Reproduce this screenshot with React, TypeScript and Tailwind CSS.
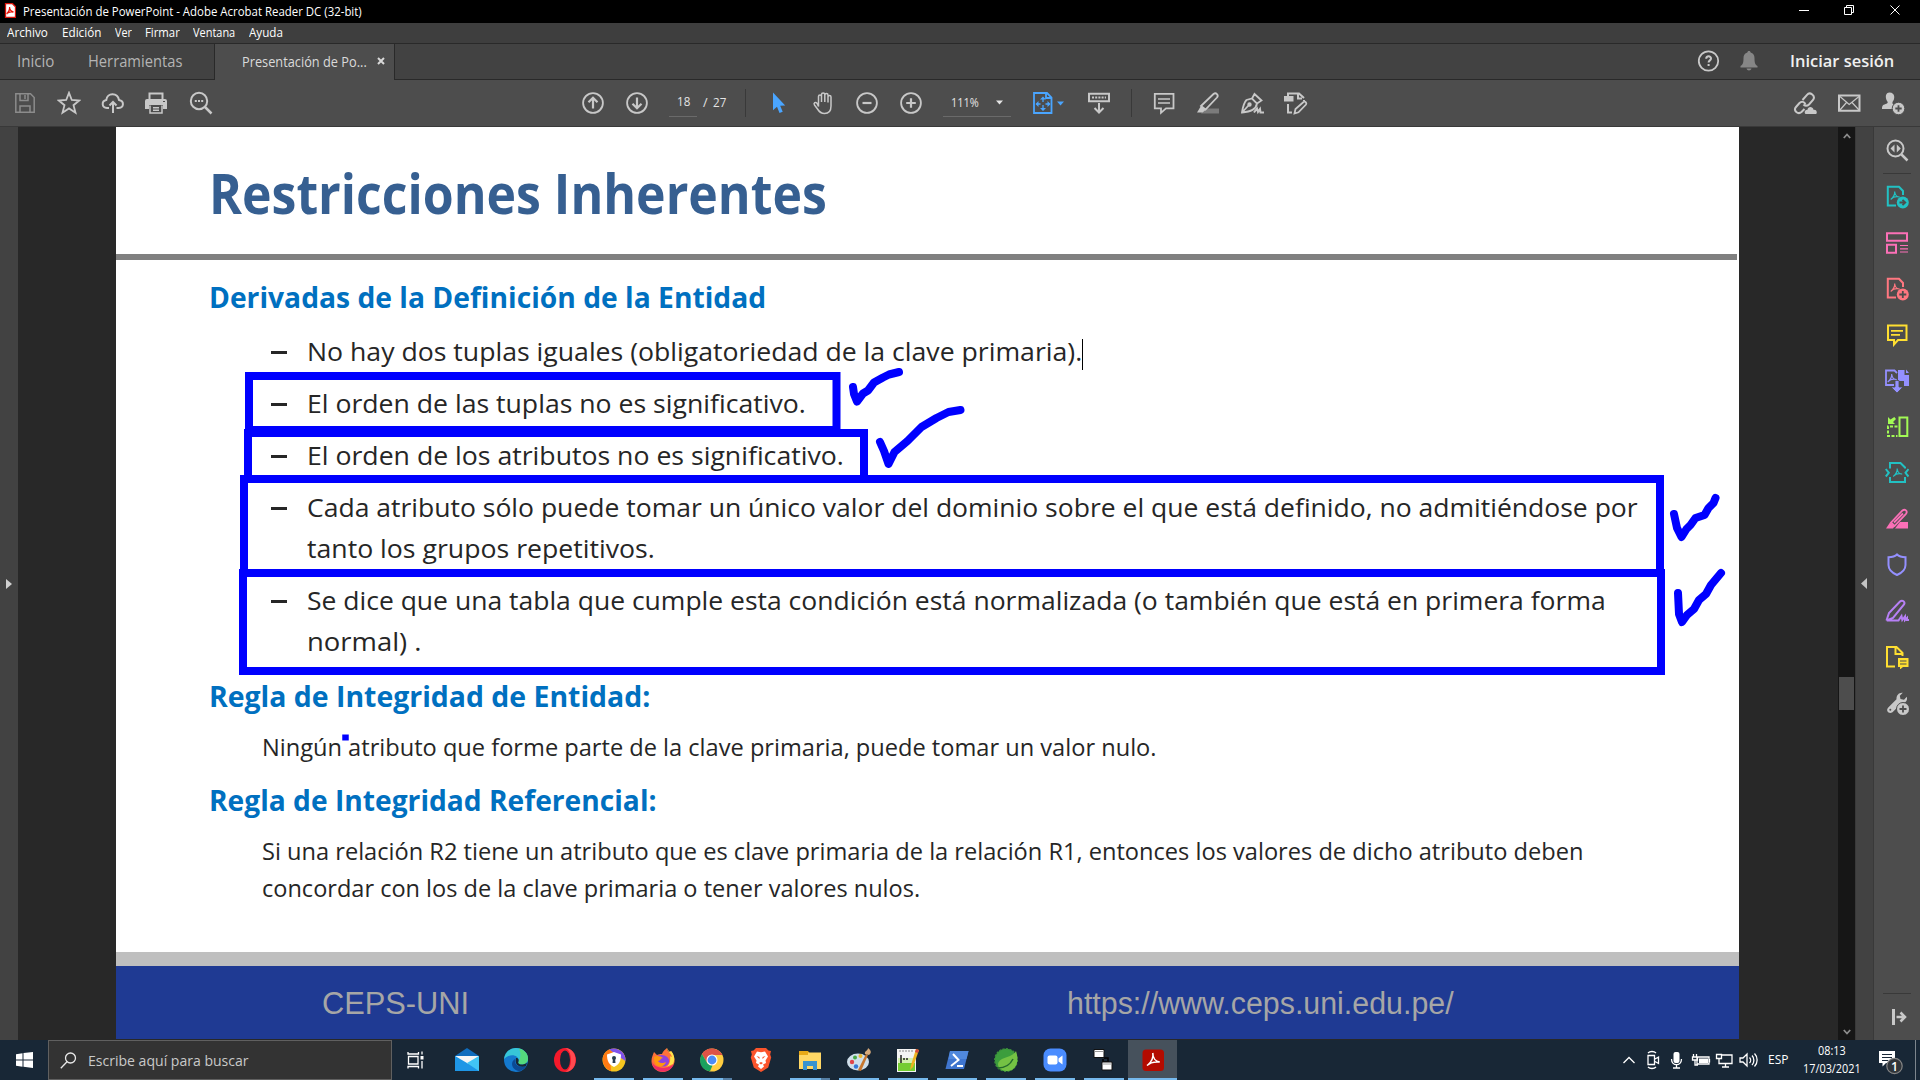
import React, { useLayoutEffect, useRef, useState } from 'react';

const UI = "font-['Open_Sans',sans-serif]";

/** Single line of text that stretches to the width set in className. */
function Fit({ className = '', children }: { className?: string; children: React.ReactNode }) {
  const outer = useRef<HTMLSpanElement>(null);
  const inner = useRef<HTMLSpanElement>(null);
  const [scale, setScale] = useState(1);
  useLayoutEffect(() => {
    if (outer.current && inner.current && inner.current.offsetWidth) {
      setScale(outer.current.clientWidth / inner.current.offsetWidth);
    }
  }, []);
  return (
    <span ref={outer} className={`block shrink-0 whitespace-nowrap ${className}`}>
      <span ref={inner} className="inline-block origin-left [font-variant-ligatures:none]" style={{ transform: `scaleX(${scale})` }}>
        {children}
      </span>
    </span>
  );
}

type IconProps = { children: React.ReactNode; className?: string };

function Icon({ children, className = 'text-[#c8c8c8]' }: IconProps) {
  return (
    <svg viewBox="0 0 24 24" width="24" height="24" fill="none" stroke="currentColor" strokeWidth="1.8" className={`block shrink-0 ${className}`}>
      {children}
    </svg>
  );
}

const Acro = ({ x = 0, y = 0 }: { x?: number; y?: number }) => (
  <path transform={`translate(${x} ${y})`} strokeWidth="1.2" d="M4.2 0.5c.3 3-1 5.500-4 8M4.200 1c.5 3.200 2 5 5 5.200M.6 8c2-2 5-2.700 8.500-2" />
);

function TitleBar() {
  return (
    <div className="flex h-[23px] shrink-0 items-center bg-black text-white">
      <svg width="12" height="15" viewBox="0 0 12 15" className="ml-[4px] mb-[2px] block">
        <path d="M1.500.7h7l3 3v10.600h-10z" fill="#fff" stroke="#d8150c" strokeWidth="1.300" />
        <path d="M5.500 4c.5 3-.8 5-2.800 7M5.500 4c.2 2.500 2 4.500 4 5M2.700 10.500c2-1.700 4-2 6.500-1.500" fill="none" stroke="#e81408" strokeWidth="1.300" />
      </svg>
      <Fit className="ml-[7px] w-[339px] text-[12px] leading-[23px]">Presentación de PowerPoint - Adobe Acrobat Reader DC (32-bit)</Fit>
      <div className="ml-auto flex items-center pr-[19px]">
        <svg width="102" height="12" viewBox="0 0 102 12" className="mb-[3px] block" fill="none" stroke="#fff" strokeWidth="1">
          <path d="M0 6.500h10M45.500 3.500h7v7h-7zM47.500 3.500v-2h7v7h-2M91.500 1.500l9 9M100.500 1.500l-9 9" />
        </svg>
      </div>
    </div>
  );
}

function MenuBar() {
  return (
    <div className="flex h-[21px] shrink-0 border-b border-[#292929] bg-[#3e3e3e] pl-[7px] text-[12px] leading-[19px] text-white">
      <Fit className="w-[41px]">Archivo</Fit>
      <Fit className="ml-[14px] w-[39px]">Edición</Fit>
      <Fit className="ml-[14px] w-[17px]">Ver</Fit>
      <Fit className="ml-[13px] w-[35px]">Firmar</Fit>
      <Fit className="ml-[13px] w-[42px]">Ventana</Fit>
      <Fit className="ml-[14px] w-[34px]">Ayuda</Fit>
    </div>
  );
}

function TabBar() {
  return (
    <div className="flex h-[36px] shrink-0 bg-[#424242] leading-[35px]">
      <div className="flex w-[215px] border-r border-b border-[#292929] pl-[17px] text-[15.500px] text-[#b4b4b4]">
        <Fit className="w-[37px]">Inicio</Fit>
        <Fit className="ml-[34px] w-[94px]">Herramientas</Fit>
      </div>
      <div className="flex w-[179px] items-center bg-[#4d4d4d] pb-[2px] pl-[27px] text-[14px] text-[#dadada]">
        <Fit className="w-[125px]">Presentación de Po...</Fit>
        <svg width="8" height="8" viewBox="0 0 8 8" className="ml-[10px] block" stroke="#d8d8d8" strokeWidth="2">
          <path d="M1 1l6 6M7 1l-6 6" />
        </svg>
      </div>
      <div className="flex flex-1 items-center border-b border-l border-[#292929] pr-[26px]">
        <div className="ml-auto flex items-center pb-px">
          <Icon>
            <circle cx="12.500" cy="12" r="9.700" />
            <path d="M10.200 9.800c0-3.400 5-3.200 4.800-.2-.1 1.800-2.400 1.800-2.400 3.900M12.600 15v2" strokeWidth="2" />
          </Icon>
          <svg width="18" height="20" viewBox="0 0 18 20" className="ml-[20px] block" fill="#868686">
            <path d="M9 0c1 0 1.600.6 1.600 1.500 2.600.8 3.900 2.800 3.900 5.500 0 5 .8 7 3 8v1.500H.5V15c2.200-1 3-3 3-8 0-2.700 1.300-4.700 3.900-5.500C7.400.6 8 0 9 0zM6.500 17.500h5C11 20 7 20 6.500 17.500z" />
          </svg>
          <Fit className="ml-[32px] w-[104px] text-[15.500px] font-semibold text-[#f0f0f0]">Iniciar sesión</Fit>
        </div>
      </div>
    </div>
  );
}

const Down = ({ className = '' }: { className?: string }) => (
  <svg width="7" height="5" viewBox="0 0 7 5" className={`block shrink-0 ${className}`} fill="currentColor">
    <path d="M0 .5h7L3.500 4.500z" />
  </svg>
);

function Toolbar() {
  return (
    <div className="flex h-[47px] shrink-0 items-center border-b border-[#393939] bg-[#4d4d4d] text-[#c8c8c8]">
      <div className="flex w-[581px] gap-5 pl-[13px]">
        <Icon className="text-[#8c8c8c]">
          <path d="M2.800 2.800h14.700l3.700 3.700v14.700H2.800zM7 3v6.500h8V3M12 4v4M7 21v-6h10v6" strokeWidth="1.500" />
        </Icon>
        <Icon><path d="M12 1.800l2.800 7.200 7.500.5-5.800 4.700 2 7.500L12 17.400l-6.500 4.300 2-7.500L1.700 9.500 9.200 9z" /></Icon>
        <Icon><path d="M8 17H6C.5 16.500.3 10 5.300 9 6 1.500 16.500 1 18 9c5.500 1 5 7.500-.2 8H15.500M12 22V11M8.500 14.500L12 11l3.500 3.500" strokeWidth="2" /></Icon>
        <Icon>
          <g transform="translate(-1 0)">
            <path d="M5.500 8V2.500h13V8" strokeWidth="2" />
            <path d="M3 8h18q2 0 2 2v8h-4v-4H5v4H1v-8q0-2 2-2z" fill="currentColor" stroke="none" />
            <path d="M6 14.500v7.500h12v-7.500M9 16.800h6M9 19.300h6" strokeWidth="1.500" />
            <path d="M19 10.500h2" stroke="#4d4d4d" strokeWidth="1" />
          </g>
        </Icon>
        <Icon>
          <circle cx="10" cy="10" r="8.200" strokeWidth="2" />
          <path d="M16 16l6.500 6.500" strokeWidth="2.500" />
          <path d="M5.800 10h2M9 10h2M12.200 10h2" strokeWidth="2" />
        </Icon>
      </div>
      <div className="flex items-center gap-5">
        <Icon><circle cx="12" cy="12" r="9.900" /><path d="M12 17.500V7M7.500 11.300L12 6.800l4.500 4.500" strokeWidth="2.200" /></Icon>
        <Icon><circle cx="12" cy="12" r="9.900" /><path d="M12 6.500V17M7.500 12.700l4.500 4.500 4.500-4.500" strokeWidth="2.200" /></Icon>
      </div>
      <div className="ml-[20px] flex h-[27px] w-[28px] justify-center border-b border-[#6a6a6a] mt-[1px] text-[12.500px] leading-[24px] text-[#e4e4e4]">
        <Fit className="w-[13px]">18</Fit>
      </div>
      <div className="flex text-[12.500px] leading-[24px] text-[#e4e4e4]">
        <Fit className="ml-[6px] w-[5px]">/</Fit>
        <Fit className="ml-[5px] w-[13px]">27</Fit>
      </div>
      <div className="ml-[19px] h-7 w-px bg-[#393939]" />
      <div className="ml-[21px] flex gap-5">
        <Icon className="text-[#4aa5ff]"><path d="M6 1.500v17.800l4-3.500 2.500 6.200 3.200-1.300-2.500-6 5-.2z" fill="currentColor" stroke="none" /></Icon>
        <Icon>
          <path d="M6.500 15.500V5.500c0-2 3-2 3 0V11V3.500c0-2 3.300-2 3.300 0V11V4c0-2 3.200-2 3.200 0v7.500V6c0-2 3-2 3 0v9c0 5-2 7.500-6.500 7.500-4 0-5.500-2-7-4.500L2.500 14c-1.300-2 1-3.500 2.500-1.800z" transform="translate(1 0)" strokeWidth="1.500" />
        </Icon>
        <Icon><circle cx="12" cy="12" r="9.900" /><path d="M7.500 12h9" strokeWidth="2.200" /></Icon>
        <Icon><circle cx="12" cy="12" r="9.900" /><path d="M7.200 12h9.600M12 7.200v9.600" strokeWidth="2.200" /></Icon>
      </div>
      <div className="ml-[20px] mt-[1px] flex h-[27px] w-[68px] items-center border-b border-[#6a6a6a] pb-px pl-[8px] text-[12.500px] leading-[24px] text-[#e4e4e4]">
        <Fit className="w-[28px]">111%</Fit>
        <Down className="ml-[17px]" />
      </div>
      <div className="ml-[20px] flex items-center text-[#4aa5ff]">
        <Icon className="text-[#4aa5ff]">
          <path d="M3 2h13l4.500 4.500V22H3zM15 2v5h5.500" />
          <path d="M12 7v4M12 14v5M5.500 13h4M14.500 13h4" strokeWidth="1.300" />
          <path d="M12 5.500l3 3H9zM12 20l3-3H9zM4.500 13l3-3v6zM19.500 13l-3-3v6z" fill="currentColor" stroke="none" />
        </Icon>
        <Down className="ml-[2px]" />
      </div>
      <Icon className="ml-[23px] text-[#c8c8c8]">
        <path d="M2 2.800h20v7.500H2zM12 12v9M7.500 17l4.500 4.500 4.500-4.500" strokeWidth="2" />
        <path d="M5 6.500h14" strokeDasharray="2 1.200" />
      </Icon>
      <div className="ml-[20px] h-7 w-px bg-[#393939]" />
      <div className="ml-[20px] flex gap-5">
        <Icon><path d="M2.800 2.800h18.700v14.500H14l-5 4.500v-4.500H2.800z" /><path d="M6 8h12M6 12h12" strokeWidth="1.300" /></Icon>
        <Icon>
          <path d="M8 17.500h15v5H5z" fill="#7b7b7b" stroke="none" />
          <path d="M5 15L17.500 3c2.500-2 5.500 1 3.500 3.500L9.500 18.500z" />
          <path d="M5 15l4.500 4-3 2.500H1z" fill="currentColor" stroke="none" />
        </Icon>
        <Icon>
          <path d="M2 21.500C3 15 4 11.500 6.500 9L12 7.500l5 5c-1 6-6 8-15 9zM12 7.500L14.500 3l7 6.500-4.500 3M2 21.500l6.500-7" />
          <circle cx="9.500" cy="13.500" r="1.300" fill="currentColor" />
          <path d="M14 21.500l3-4 1 3.500 2-3 .5 3.500H24" strokeWidth="2" />
        </Icon>
        <Icon>
          <path d="M4 6V2.500h11L20 7M14 2.500v5h4M4 13v8.500h4M20 9v1" strokeWidth="2" />
          <path d="M0 5h9.500v5.500H0z" fill="currentColor" stroke="none" />
          <path d="M10.500 22.500l1-4.500 8-7c2-1 3.500 1 2.500 2.500l-7.500 7.800z" />
        </Icon>
      </div>
      <div className="ml-auto flex gap-5 pr-[15px]">
        <Icon>
          <path d="M9.500 9L14 3.800c3-3.500 9 1 6 5.200l-4 4.500c-2 2-4.500 1.500-5.500 0M12.500 13.500c-1-3-4-3.500-6-1.500L3 16c-3 3.500 2 8 5.500 5l3-3" strokeWidth="2" />
          <path d="M12.500 23c-2-2 0-4.500 2-4.200.5-4 5.500-3.500 6 0 3.500-.5 4 3.500 2.500 4.200z" fill="currentColor" stroke="none" />
        </Icon>
        <Icon><path d="M2 4.500h20.500v15.200H2z" strokeWidth="2" /><path d="M3 5.500l9.200 8L22 5.500M3 19l6.500-7.500M22 19l-7-7.500" strokeWidth="1.200" /></Icon>
        <Icon>
          <path d="M8.500 1.500c6 0 5.500 7 3 9.500-.5 2 .5 2.500 3 3v4H1c0-4 1-4 5-5.500C7 11.500 7 11 6 10 4 6 4.500 1.500 8.500 1.500z" fill="currentColor" stroke="none" />
          <circle cx="17.500" cy="17.500" r="6.300" fill="#c8c8c8" stroke="#4d4d4d" strokeWidth="1" />
          <path d="M14.300 17.500h6.400M17.500 14.300v6.400" stroke="#4d4d4d" />
        </Icon>
      </div>
    </div>
  );
}

const H2 = "text-[29px] leading-[36px] font-bold text-[#0070c0]";

function Bullet({ children }: { children: React.ReactNode }) {
  return (
    <li className="flex">
      <span className="mt-[20px] mr-[20px] h-[3px] w-[16px] shrink-0 bg-[#262626]" />
      <div>{children}</div>
    </li>
  );
}

function Slide() {
  return (
    <div className={`relative flex h-[912px] w-[1623px] shrink-0 flex-col bg-white text-[#262626] ${UI}`}>
      <h1 className="mt-[36px] ml-[93px] text-[55px] leading-[60px] font-bold text-[#365f91]">
        <Fit className="w-[618px]">Restricciones Inherentes</Fit>
      </h1>
      <div className="mt-[31px] mr-[2px] h-[6px] shrink-0 bg-[#808080]" />
      <div className="pl-[93px]">
        <h2 className={`mt-[19px] ${H2}`}><Fit className="w-[557px]">Derivadas de la Definición de la Entidad</Fit></h2>
        <ul className="mt-[16px] flex flex-col gap-[11px] pl-[62px] text-[25.500px] leading-[41px]">
          <Bullet><Fit className="w-[775px]">No hay dos tuplas iguales (obligatoriedad de la clave primaria).</Fit></Bullet>
          <Bullet><Fit className="w-[499px]">El orden de las tuplas no es significativo.</Fit></Bullet>
          <Bullet><Fit className="w-[537px]">El orden de los atributos no es significativo.</Fit></Bullet>
          <Bullet>
            <Fit className="w-[1331px]">Cada atributo sólo puede tomar un único valor del dominio sobre el que está definido, no admitiéndose por</Fit>
            <Fit className="w-[348px]">tanto los grupos repetitivos.</Fit>
          </Bullet>
          <Bullet>
            <Fit className="w-[1299px]">Se dice que una tabla que cumple esta condición está normalizada (o también que está en primera forma</Fit>
            <Fit className="w-[114px]">normal) .</Fit>
          </Bullet>
        </ul>
        <h2 className={`mt-[16px] ${H2}`}><Fit className="w-[441px]">Regla de Integridad de Entidad:</Fit></h2>
        <div className="mt-[15px] pl-[53px] text-[23px] leading-[37px]">
          <Fit className="w-[895px]">Ningún atributo que forme parte de la clave primaria, puede tomar un valor nulo.</Fit>
        </div>
        <h2 className={`mt-[16px] ${H2}`}><Fit className="w-[448px]">Regla de Integridad Referencial:</Fit></h2>
        <div className="mt-[15px] pl-[53px] text-[23px] leading-[37px]">
          <Fit className="w-[1321px]">Si una relación R2 tiene un atributo que es clave primaria de la relación R1, entonces los valores de dicho atributo deben</Fit>
          <Fit className="w-[658px]">concordar con los de la clave primaria o tener valores nulos.</Fit>
        </div>
      </div>
      <div className="mt-auto h-[14px] shrink-0 bg-[#bfbfbf]" />
      <div className="flex h-[73px] shrink-0 items-center bg-[#1f3a93] pl-[206px] font-['Liberation_Sans',sans-serif] text-[31px] leading-[73px] text-[#a6a6a6]">
        <Fit className="mt-[2px] w-[147px]">CEPS-UNI</Fit>
        <Fit className="mt-[2px] ml-[598px] w-[387px]">https://www.ceps.uni.edu.pe/</Fit>
      </div>

      {/* Pen annotations drawn over the slide */}
      <svg className="absolute top-0 left-0" width="1623" height="912" viewBox="116 127 1623 912" fill="none" stroke="#0000ff" strokeWidth="8">
        <path d="M249 376h587.500v54H249z" />
        <path d="M248 433h616v46H248z" />
        <path d="M244 479h1416v94H244z" />
        <path d="M243 573h1418v98H243z" />
        <g strokeLinecap="round" strokeLinejoin="round" strokeWidth="8">
          <path d="M853 387l1 7 3 7.500 6-8 5-3 6-8 9-5 6-3 10-2.500" />
          <path d="M880 442l4 9 4.500 13 6-12 13-11 14-14 15-9 12-6 12-2" />
          <path d="M1674 514l3 14 4.500 9 5-8 4-4 5-7 9-3 4-7 5-5 2-5" />
          <path d="M1678 593l1 21 3 8 5-7 7-6 5-9 7-6 5-9 10-12" />
        </g>
        <path d="M345.500 734.500v6" strokeWidth="6.500" />
        <path d="M1082.500 339v31" stroke="#000" strokeWidth="1" />
      </svg>
    </div>
  );
}

const Sep = ({ className = '' }: { className?: string }) => <div className={`h-px w-7 shrink-0 bg-[#393939] ${className}`} />;

function ToolsPane() {
  return (
    <div className="flex w-[47px] shrink-0 flex-col items-center border-l border-[#393939] bg-[#4d4d4d] pt-[11px] pr-px">
      <Icon>
        <circle cx="10.500" cy="10.500" r="8" strokeWidth="2" />
        <path d="M16.500 16.500l6 6" strokeWidth="2.500" />
        <path d="M9.500 6.500v8l-4-4zM11.800 6.500v8l4-4z" fill="currentColor" stroke="none" />
      </Icon>
      <Sep className="mt-[11px]" />
      <div className="mt-[11px] flex flex-col gap-[22px]">
        <Icon className="text-[#22c1c3]">
          <path d="M11 20.500H2.800V1.800H14l4 4.200V10" strokeWidth="2" /><Acro x={5.500} y={6} />
          <circle cx="17.800" cy="17.500" r="6" fill="currentColor" stroke="none" />
          <path d="M14.500 17.500h5M17.500 14.800l2.800 2.700-2.800 2.700" stroke="#4d4d4d" />
        </Icon>
        <Icon className="text-[#fb70b7]">
          <path d="M2 2.200h20v7.500H2zM2 13.800h9v8H2z" strokeWidth="2" /><path d="M15 14.500h8M15 17.800h8M15 21h8" strokeWidth="1.200" />
        </Icon>
        <Icon className="text-[#ff7780]">
          <path d="M11 20.500H2.800V1.800H14l4 4.200V10" strokeWidth="2" /><Acro x={5.500} y={6} />
          <circle cx="17.800" cy="17.500" r="6" fill="currentColor" stroke="none" />
          <path d="M14.300 17.500h7M17.800 14v7" stroke="#4d4d4d" />
        </Icon>
        <Icon className="text-[#ffdf31]">
          <path d="M3 2.500h18.500V17H13l-4 4.500V17H3z" strokeWidth="2" /><path d="M6 7.800h12M6 11.800h9" />
        </Icon>
        <Icon className="text-[#9490ff]">
          <path d="M9 16H1V1.500h8.500L12 4" strokeWidth="1.800" />
          <path d="M13 1h6.500v5H24v11h-5v-5h-6z" fill="currentColor" stroke="none" />
          <path d="M21 0.500l3 3.500h-3z" fill="currentColor" stroke="none" />
          <path d="M10 11.500h4V18h4l-6 6-6-6h4z" fill="currentColor" stroke="#4d4d4d" strokeWidth=".8" />
          <Acro x={2.500} y={4.500} />
        </Icon>
        <Icon className="text-[#a2fa55]">
          <path d="M14.500 2.500h7.800v18.500h-7.800z" strokeWidth="2" />
          <path d="M12.500 11.500H3V21h9.500" strokeDasharray="3 1.500" strokeWidth="2" />
          <path d="M3 2v7h7L8 7l3-3-1.700-2L5.500 4.500z" fill="currentColor" stroke="none" />
        </Icon>
        <Icon className="text-[#22c1c3]">
          <path d="M5 7.500V2h10.500L20 6.500v1M5 16v5h15v-5" strokeWidth="2" /><Acro x={8} y={7} />
          <path d="M.8 8l3 3.800-3 3.700M23.500 8l-3 3.800 3 3.700" strokeWidth="2" />
        </Icon>
        <Icon className="text-[#fb70b7]">
          <path d="M6 15.500L17.500 3.500c2.500-2 5.500.8 3.500 3.300L9.500 19zM9 15.500L18 6.500" />
          <path d="M5 15.500l4.500 4-1.500 2H1zM10 21.500l5-6.500h8v6.500z" fill="currentColor" stroke="none" />
        </Icon>
        <Icon className="text-[#9490ff]">
          <path d="M12 1.500c2 2 5 2.700 8.500 2.800V12c0 5-4 8-8.500 10-4.500-2-8.500-5-8.500-10V4.300C7 4.200 10 3.500 12 1.500z" strokeWidth="2" />
        </Icon>
        <Icon className="text-[#b780f5]">
          <path d="M1.500 21.500L4 14 15 2.500c2.500-2 5.500.5 4 3L8 19l-6.500 2.500M3 21.500h10.500l3-4.500.8 4 2.700-3.500v3.500l2-2V21h2" strokeWidth="2" />
        </Icon>
        <Icon className="text-[#ffdf31]">
          <path d="M10 21.500H2V2h9.500l6 6v3M10.500 2v7h7" strokeWidth="2" />
          <path d="M13 13h10.500v9H18l-3 2.500V22h-2z" fill="currentColor" stroke="none" />
          <path d="M15 16h6.500M15 19h6.500" stroke="#4d4d4d" strokeWidth="1.200" />
        </Icon>
        <Icon>
          <path d="M17.800 1.800l-3 3 .7 3.300 3.500.7 2.800-3c1 3.500-1 6.500-5 6.300L7.500 21.300c-3.500 2.300-7-1.500-4.500-4.500l8.500-8.500c-.3-4 2.500-7 6.300-6.500z" fill="currentColor" stroke="none" />
          <circle cx="5.300" cy="18.800" r="1" fill="#4d4d4d" stroke="none" />
          <circle cx="18" cy="18" r="6.500" fill="currentColor" stroke="#4d4d4d" strokeWidth="1" />
          <path d="M14.500 18h7M18 14.500v7" stroke="#4d4d4d" />
        </Icon>
      </div>
      <Sep className="mt-auto" />
      <Icon className="mt-[11px] mb-[11px] ml-[8px] text-[#c8c8c8]"><path d="M4.500 4v16" strokeWidth="3" /><path d="M7.500 12h8M11.500 7.500l4.500 4.500-4.500 4.500" strokeWidth="2.500" /></Icon>
    </div>
  );
}

function Workspace() {
  return (
    <div className="flex h-[913px] shrink-0 bg-[#282828]">
      <div className="flex w-[18px] items-center justify-center bg-[#424242]">
        <svg width="6" height="10" viewBox="0 0 6 10" fill="#d0d0d0"><path d="M0 0l6 5-6 5z" /></svg>
      </div>
      <div className="flex flex-1 pl-[98px]"><Slide /></div>
      <div className="flex w-[17px] flex-col items-center bg-[#161616]">
        <svg width="8" height="6" viewBox="0 0 8 6" className="mt-[6px] block" fill="none" stroke="#8c8c8c" strokeWidth="1.800"><path d="M.8 5L4 1.500 7.200 5" /></svg>
        <div className="mt-[538px] h-[33px] w-[15px] bg-[#4d4d4d]" />
        <svg width="8" height="6" viewBox="0 0 8 6" className="mt-auto mb-[5px] block" fill="none" stroke="#8c8c8c" strokeWidth="1.800"><path d="M.8 1L4 4.500 7.200 1" /></svg>
      </div>
      <div className="flex w-[18px] items-center justify-center border-l border-[#393939] bg-[#424242] pr-px">
        <svg width="6" height="11" viewBox="0 0 6 11" fill="#c4c4c4"><path d="M6 0L0 5.500 6 11z" /></svg>
      </div>
      <ToolsPane />
    </div>
  );
}

type AppState = 'none' | 'open' | 'multi' | 'active';

function Task({ state = 'none', children }: { state?: AppState; children: React.ReactNode }) {
  return (
    <div className={`flex w-[49px] shrink-0 flex-col items-center ${state === 'active' ? 'bg-[#46515c]' : ''}`}>
      <svg width="24" height="24" viewBox="0 0 24 24" className="mt-[8px] block">{children}</svg>
      {state === 'open' && <div className="mt-auto h-[2px] w-[40px] bg-[#76b9ed]" />}
      {state === 'active' && <div className="mt-auto h-[2px] w-full bg-[#76b9ed]" />}
      {state === 'multi' && (
        <div className="mt-auto flex h-[2px] w-[40px]"><div className="w-[31px] bg-[#76b9ed]" /><div className="w-[9px] bg-[#557fa5]" /></div>
      )}
    </div>
  );
}

function Taskbar() {
  return (
    <div className={`flex h-[40px] shrink-0 bg-[#182736] text-white ${UI}`}>
      <div className="flex w-[48px] items-center justify-center">
        <svg width="17" height="16" viewBox="0 0 17 16" fill="#fff"><path d="M0 2.200l6.500-.9v6.200H0zM7.500 1.100L17 0v7.500H7.500zM0 8.500h6.500v6.200L0 13.800zM7.500 8.500H17V16l-9.500-1.200z" /></svg>
      </div>
      <div className="flex w-[344px] items-center border border-[#606060] bg-[#333] pl-[11px]">
        <svg width="17" height="17" viewBox="0 0 17 17" fill="none" stroke="#e8e8e8" strokeWidth="1.300"><circle cx="10.500" cy="6" r="5" /><path d="M7 9.700L.8 16.200" /></svg>
        <Fit className="ml-[11px] w-[161px] text-[15px] leading-[39px] text-[#c9c9c9]">Escribe aquí para buscar</Fit>
      </div>
      <div className="flex w-[50px] items-center justify-center pr-[3px]">
        <svg width="17" height="18" viewBox="0 0 17 18" fill="none" stroke="#fff" strokeWidth="1.300"><path d="M1.500 5.500h9.500v7.500H1.500zM1 1v2h10.500V1M1 17.500v-2h10.500v2M15 .5v3M15 10v7.500" /><path d="M13.500 5h3v3.500h-3z" fill="#fff" stroke="none" /></svg>
      </div>
      <Task>
        <path d="M0 8L12 0l12 8v4H0z" fill="#0f6cbd" /><path d="M0 8h24v15H0z" fill="#29aef0" /><path d="M0 8h24L12 17z" fill="#f5f5f5" /><path d="M0 8v15h24L12 15z" fill="#1e96e6" /><path d="M24 8v15L12 15z" fill="#41c5f5" />
      </Task>
      <Task>
        <circle cx="12" cy="12" r="12" fill="#1479cf" />
        <path d="M0 11C1 4 6 0 12 0c7 0 12 5 12 10.500 0 4-3 6-6.500 6-3 0-4-1.500-3-3C16 8 7 4 0 11z" fill="#37c6d8" />
        <path d="M15 .5c6 1.500 9 5.500 9 10 0 4-3 6-6.500 6-3 0-4-1.500-3-3C17 9 17 5 15 .5z" fill="#5fe05f" opacity=".75" />
        <path d="M11 11c-6 4-2 12 5 12 3-1 5-3 6-5-6 2-12 0-11-7z" fill="#0c4a94" />
        <path d="M12 10c2-.5 3 1.500 2.500 3.500-1 1.500.5 3 3 3 2 0 4-.5 5.500-2l-1 3.500c-5 2-12 0-10-8z" fill="#182736" />
      </Task>
      <Task>
        <ellipse cx="12" cy="12" rx="11" ry="12" fill="#f5192b" /><path d="M12 0c14 0 14 24 0 24 8-3 8-21 0-24z" fill="#ff4a50" /><ellipse cx="12" cy="12" rx="5" ry="9.500" fill="#182736" />
      </Task>
      <Task state="open">
        <circle cx="12" cy="12" r="11.500" fill="#f4c51f" /><path d="M7 1.500C15-2 24 4 23.500 13L13 6z" fill="#8052eb" /><path d="M7 1.500C-3 7 0 20 9 23L8 7l4-2z" fill="#ff7a13" />
        <path d="M12 4l7 2.500c0 7-2 10-7 12.500-5-2.500-7-5.500-7-12.500z" fill="#fff" /><circle cx="12" cy="10" r="2" fill="#273b4e" /><path d="M11 10h2l.5 5h-3z" fill="#273b4e" />
      </Task>
      <Task state="open">
        <path d="M3 4l3 3c2-1 3-1 5-1 1-3 3-4.500 5-6 0 2 1 3 2 4l2-1c3 4 4 8 3.500 11C22 20 17 24 12 24 5 24 .5 19 .5 13 .5 9 2 7 3 4z" fill="#ff7139" />
        <path d="M16 0c0 3 4 5 5 9-1 0-2-1-2-1 1 6-1 9-4 11l7-3c3-6 0-11-2-13l-1 1c-1-1-2-2-3-4z" fill="#ffe14a" />
        <path d="M1 14c1 12 18 13 22 2-4 5-18 6-22-2z" fill="#ee2c66" /><path d="M6 8c6-3 13 1 12 6-1 5-8 6-11 2z" fill="#8f42dd" /><path d="M3 9c3-2 7-1 9 1-3 0-2 3-5 3 2 3 6 2 8 1-2 7-13 6-12-5z" fill="#ff980e" />
      </Task>
      <Task state="multi">
        <circle cx="12" cy="12" r="11.500" fill="#ffcd40" /><path d="M2 6c4-7.500 16-7.500 20.500 1H12L7 14.500z" fill="#de5347" /><path d="M2 6l5.500 9.500 5 2L10 23.300C0 22-2 12 2 6z" fill="#1aa15f" /><circle cx="12" cy="12" r="5.500" fill="#fff" /><circle cx="12" cy="12" r="4.400" fill="#4c8bf5" />
      </Task>
      <Task>
        <path d="M7 0h10l2.500 2.500L22 3l-.8 3.500 1 3-3 10L12 24l-7.200-4.500-3-10 1-3L2 3l2.500-.5z" fill="#fb542b" />
        <path d="M8 3.500l4 .8 4-.8 3 5-2.500 4 .5 2.500-3 1.500 1 2-3 2.500L9 18.500l1-2L7 15l.5-2.500L5 8.500z" fill="#fff" /><path d="M7.500 8l3 1v2zM16.500 8l-3 1v2zM10 15l2-1 2 1-2 1.500z" fill="#fb542b" />
      </Task>
      <Task state="multi">
        <path d="M1 3h9l1.500 2H1z" fill="#e5a50c" /><path d="M1 4.500h22V21H1z" fill="#ffd765" /><path d="M1 3h9v4H1z" fill="#e8a917" /><path d="M5 22v-9h14v9h-4v-4H9v4z" fill="#3893d0" />
      </Task>
      <Task state="open">
        <ellipse cx="11" cy="14" rx="11" ry="8.500" fill="#cfdfea" /><circle cx="5" cy="14" r="2.200" fill="#e0444a" /><circle cx="8" cy="9.500" r="2" fill="#46a846" /><circle cx="13.500" cy="8" r="2" fill="#e9b72f" /><circle cx="9" cy="18.500" r="2.200" fill="#3478d8" /><path d="M11 22L19 6l2 1-7 16z" fill="#c7772f" /><path d="M18 6c-1-3 3-3 3-6 3 2 4 5 1 7z" fill="#d6aa7b" />
      </Task>
      <Task state="open">
        <path d="M1 1h19v23H1z" fill="#f4f4f4" /><path d="M2 13h17v10H2z" fill="#75cd32" /><path d="M2 10h17v5H2z" fill="#d4efb0" /><path d="M4 2v2M7 2v2M10 2v2M13 2v2M16 2v2" stroke="#888" /><path d="M5 7v8M7 11h2M10 11h2" stroke="#222" strokeWidth="1.500" /><path d="M20 1l3 1-6 17-3 3 1-5z" fill="#efb321" /><path d="M20 1l3 1-1 3-3-1z" fill="#d84a3c" />
      </Task>
      <Task state="open">
        <path d="M5 3h18.500l-4.500 18H.5z" fill="#3f75cf" /><path d="M5 3h18.500l-2 8-18 0z" fill="#5088dc" /><path d="M8 6l5.500 6L6 18M12 18h6" fill="none" stroke="#fff" strokeWidth="2" />
      </Task>
      <Task state="open">
        <circle cx="12" cy="12" r="11.200" fill="#3c9d3d" stroke="#3c8f3b" strokeWidth="1.500" strokeDasharray="2 1.500" /><path d="M22 3c4 12-1 20-9 20-5 0-9-3-9-7C6 8 17 11 22 3z" fill="#74c244" /><path d="M4 20c8 0 12-3 15-9" fill="none" stroke="#246b2d" strokeWidth="1.500" />
      </Task>
      <Task state="open">
        <rect x=".5" y=".5" width="23" height="23" rx="7" fill="#4a8cff" /><rect x="4.500" y="7.500" width="10" height="9" rx="2" fill="#fff" /><path d="M15.500 10.500l4-3v9l-4-3z" fill="#fff" />
      </Task>
      <Task state="open">
        <path d="M11 11v3h4M12 10h4v4" fill="none" stroke="#000" strokeWidth="1.500" /><path d="M2 1.500h10v8H2zM10 14h10v8H10z" fill="#fff" stroke="#111" /><path d="M2.500 3.500h9M10.500 16h9" stroke="#9a9a9a" />
      </Task>
      <Task state="active">
        <rect x="1.500" y="1.500" width="21.500" height="21.500" rx="3.500" fill="#b30b00" /><path d="M11.800 5c1 5-1.500 9-5.500 12.500M11.800 5c0 5 3 8.500 7 9M6 17.500c3-3 7-4 12.500-3.500" fill="none" stroke="#fff" strokeWidth="1.500" />
      </Task>

      <div className="ml-auto flex items-center">
        <svg width="140" height="20" viewBox="0 0 140 20" className="block" fill="none" stroke="#fff" strokeWidth="1.300">
          <path d="M2.500 13l5.500-5.500L13.500 13" />
          <path d="M27 5.500h6.500v9H27zM34 9l3.500-2v6.500L34 11.500M27 3c2-2 6-2 8 0M27 17c2 2 6 2 8 0" />
          <rect x="52.500" y="2" width="6" height="11" rx="2" fill="#fff" stroke="none" /><path d="M50.500 9c0 7.500 10 7.500 10 0M55.500 15v3M52 18h7" />
          <path d="M76 7h12v7H76zM88.500 9v3.500M72.500 4v3M75.500 4v3M71.500 7h5v3h-5zM74 10v5h3" /><path d="M78 8.500h9v4.500h-9z" fill="#fff" stroke="none" />
          <path d="M101 5h10v8.500H98V10M104.500 13.500V17M101 17h7M95.500 4.500h5v4h-5zM98 8v4" />
          <path d="M119 8h3l4-4v12l-4-4h-3zM128.500 7.500c1.500 1.500 1.500 4 0 5.500M131 5.500c2.500 2.500 2.500 7 0 9.500M133.500 3.500c3.500 3.500 3.500 9.500 0 13" />
        </svg>
        <Fit className="ml-[7px] w-[20px] text-[12px] leading-[38px]">ESP</Fit>
        <div className="ml-[15px] flex flex-col items-center text-[12px] leading-[18px]">
          <Fit className="w-[28px]">08:13</Fit>
          <Fit className="w-[58px]">17/03/2021</Fit>
        </div>
        <svg width="26" height="26" viewBox="0 0 26 26" className="ml-[17px] mt-[4px] block">
          <path d="M1 2h16v12H8l-3.500 3.500V14H1z" fill="#fff" /><path d="M4 5.500h10M4 8.500h10M4 11.500h6" stroke="#182736" strokeWidth="1.200" />
          <circle cx="16.500" cy="17" r="7.700" fill="#30353a" stroke="#858585" strokeWidth="1.200" />
          <text x="13" y="21.500" fontSize="12.500" fontWeight="600" fill="#fff" fontFamily="Open Sans, sans-serif">1</text>
        </svg>
        <div className="ml-[11px] mr-[4px] h-[40px] w-px bg-[#7d858d]" />
      </div>
    </div>
  );
}

export default function App() {
  return (
    <div className={`flex h-[1080px] w-[1920px] flex-col overflow-hidden bg-[#282828] ${UI}`}>
      <TitleBar />
      <MenuBar />
      <TabBar />
      <Toolbar />
      <Workspace />
      <Taskbar />
    </div>
  );
}
